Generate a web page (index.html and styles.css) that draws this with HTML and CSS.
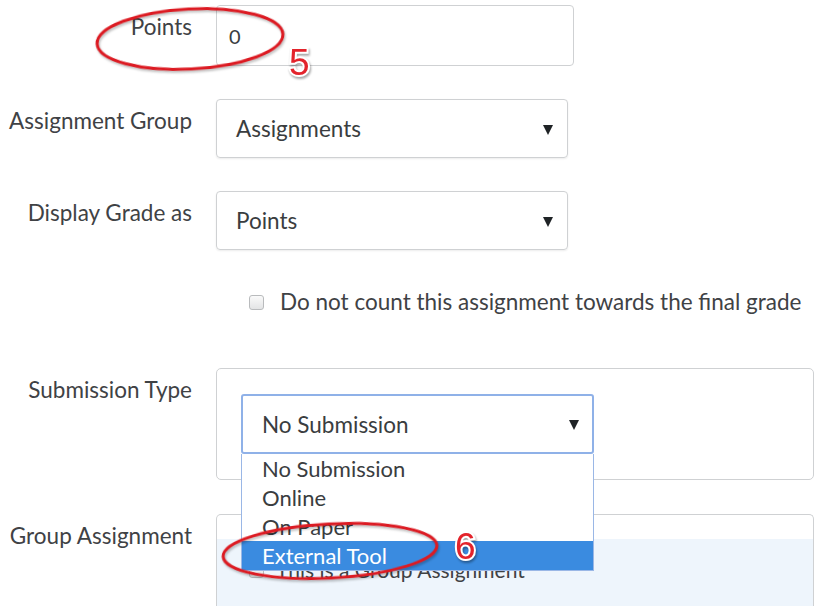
FILE: index.html
```html
<!DOCTYPE html>
<html lang="en">
<head>
<meta charset="utf-8">
<title>Assignment settings</title>
<link rel="stylesheet" href="styles.css">
</head>
<body>
<div class="form">
  <div class="row">
    <label class="lbl">Points</label>
    <div class="input">0</div>
  </div>

  <div class="row row-gap">
    <label class="lbl">Assignment Group</label>
    <div class="select">Assignments<span class="caret"></span></div>
  </div>

  <div class="row row-gap">
    <label class="lbl">Display Grade as</label>
    <div class="select">Points<span class="caret"></span></div>
  </div>

  <div class="row row-check">
    <span class="cb"></span>
    <span class="check-text">Do not count this assignment towards the final grade</span>
  </div>

  <div class="row row-sub">
    <label class="lbl">Submission Type</label>
    <div class="box box-sub">
      <div class="select-wrap">
        <div class="select select-open">No Submission<span class="caret"></span></div>
        <ul class="menu">
          <li>No Submission</li>
          <li>Online</li>
          <li>On Paper</li>
          <li class="active">External Tool</li>
        </ul>
      </div>
    </div>
  </div>

  <div class="row row-group">
    <label class="lbl">Group Assignment</label>
    <div class="box box-group">
      <div class="group-band">
        <span class="cb"></span>
        <span class="group-text">This is a Group Assignment</span>
      </div>
    </div>
  </div>
</div>

<svg class="marks" width="814" height="607" viewBox="0 0 814 607">
  <ellipse cx="190" cy="39" rx="93" ry="30" transform="rotate(-3 190 39)"/>
  <ellipse cx="330" cy="551" rx="107" ry="27" transform="rotate(-3 330 551)"/>
  <text x="289" y="75">5</text>
  <text x="455" y="559">6</text>
</svg>
</body>
</html>
```

FILE: styles.css
```css
html, body {
  margin: 0;
  padding: 0;
}

body {
  position: relative;
  width: 814px;
  height: 607px;
  overflow: hidden;
  background: #fff;
  font-family: Lato, "Open Sans", "Liberation Sans", sans-serif;
  color: #3a3d40;
}

.form {
  padding-top: 5px;
}

.row {
  display: flex;
  align-items: flex-start;
}

.row-gap {
  margin-top: 33px;
}

.lbl {
  flex: none;
  width: 192px;
  margin-right: 24px;
  padding-top: 9px;
  text-align: right;
  font-size: 22.5px;
  line-height: 26px;
  color: #3f4245;
}

.input {
  box-sizing: border-box;
  width: 358px;
  height: 61px;
  padding: 0 12px;
  display: flex;
  align-items: center;
  border: 1px solid #cfd1d3;
  border-radius: 4px;
  font-size: 20px;
  color: #3a3d40;
}

.select {
  position: relative;
  box-sizing: border-box;
  width: 352px;
  height: 59px;
  padding-left: 19px;
  display: flex;
  align-items: center;
  border: 1px solid #cfd1d3;
  border-radius: 4px;
  box-shadow: 0 1px 2px rgba(0, 0, 0, 0.08);
  font-size: 22.5px;
  color: #3a3d40;
}

.caret {
  position: absolute;
  right: 14px;
  top: 50%;
  margin-top: -4px;
  width: 0;
  height: 0;
  border-left: 5px solid transparent;
  border-right: 5px solid transparent;
  border-top: 10px solid #1f2326;
}

.row-check {
  margin-top: 39px;
  padding-left: 249px;
  align-items: center;
  font-size: 22.5px;
  line-height: 26px;
  color: #3f4245;
}

.cb {
  flex: none;
  box-sizing: border-box;
  width: 15px;
  height: 15px;
  border: 1px solid #b9bbbd;
  border-radius: 3px;
  background: linear-gradient(#fafafa, #e3e4e5);
}

.check-text {
  margin-left: 16px;
}

.row-sub {
  margin-top: 53px;
}

.box {
  box-sizing: border-box;
  width: 640px;
  border: 1px solid #cfd1d3;
  border-radius: 5px;
}

.box-sub {
  height: 112px;
  padding: 25px 0 0 24px;
}

.select-wrap {
  position: relative;
  z-index: 2;
  width: 353px;
}

.select-open {
  width: 353px;
  height: 60px;
  border: 2px solid #8fb1e8;
  border-radius: 3px;
  padding-left: 19px;
  box-shadow: none;
}

.select-open .caret {
  right: 13px;
}

.menu {
  position: absolute;
  top: 100%;
  left: 0;
  box-sizing: border-box;
  width: 353px;
  margin: 0;
  padding: 0;
  list-style: none;
  background: #fff;
  border: 1px solid #9ab7e6;
  border-top: none;
}

.menu li {
  height: 29px;
  padding-left: 20px;
  font-size: 22px;
  line-height: 29px;
  color: #3a3d40;
}

.menu li.active {
  background: #3a8be0;
  color: #fff;
}

.row-group {
  margin-top: 34px;
}

.box-group {
  height: 92px;
  padding-top: 24px;
  border-bottom: none;
  border-radius: 5px 5px 0 0;
}

.group-band {
  height: 100%;
  display: flex;
  align-items: flex-start;
  padding: 18px 0 0 32px;
  box-sizing: border-box;
  background: #eef5fc;
  font-size: 21px;
  line-height: 26px;
  color: #3f4245;
}

.group-band .cb {
  margin-top: 6px;
}

.group-text {
  margin-left: 12px;
}

.marks {
  position: absolute;
  top: 0;
  left: 0;
  z-index: 5;
  pointer-events: none;
}

.marks ellipse {
  fill: none;
  stroke: #dc1a22;
  stroke-width: 3;
  filter: drop-shadow(1px 2px 1px rgba(0, 0, 0, 0.25));
}

.marks text {
  font-family: "Liberation Sans", Arial, sans-serif;
  font-size: 37px;
  font-weight: 400;
  fill: #e3232b;
  stroke: #fff;
  stroke-width: 4px;
  paint-order: stroke;
  filter: drop-shadow(1px 2px 1px rgba(0, 0, 0, 0.35));
}
```
